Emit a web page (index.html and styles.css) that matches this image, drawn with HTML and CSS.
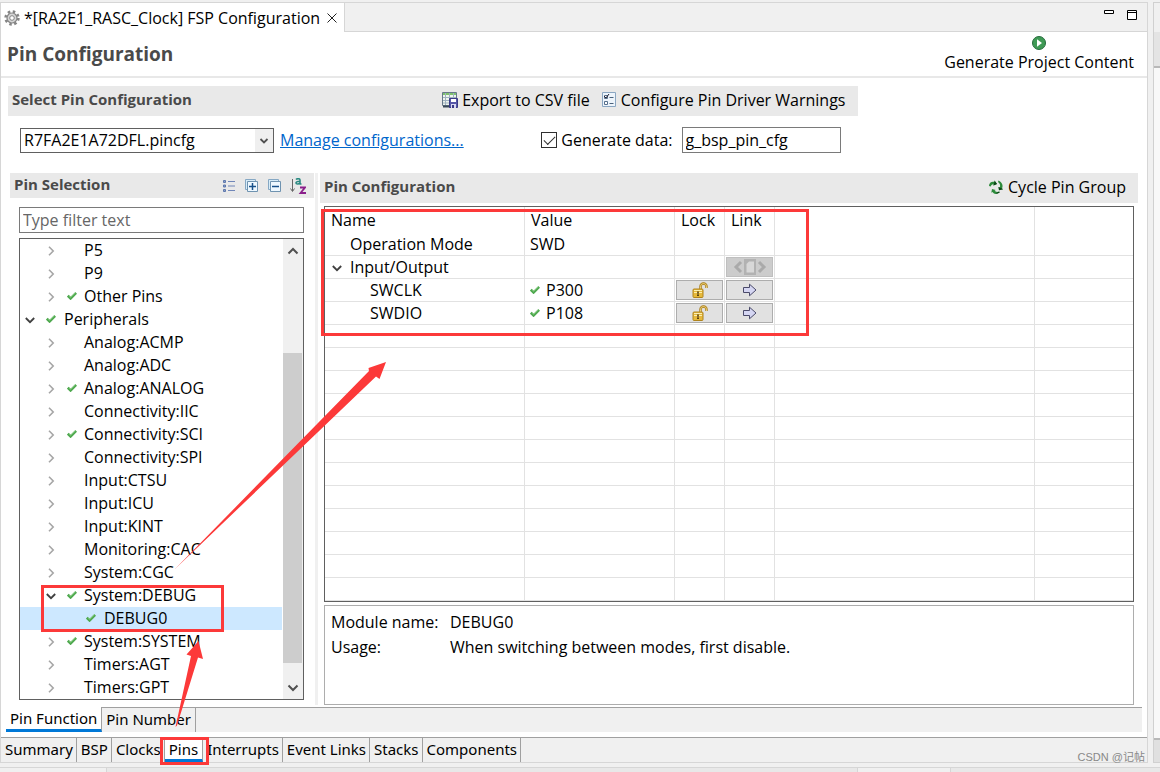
FILE: index.html
```html
<!DOCTYPE html>
<html lang="en">
<head>
<meta charset="utf-8">
<title>FSP Configuration</title>
<link rel="stylesheet" href="styles.css">
</head>
<body>
<svg class="defs" aria-hidden="true">
  <symbol id="tick" viewBox="0 0 10 8"><path d="M.8 3.700 3.600 6.500 9.200.9" fill="none" stroke="#4fa94f" stroke-width="2.500"/><path d="M2 3.700 3.700 5.300 8.600.6" fill="none" stroke="#8fd08a" stroke-width=".8"/></symbol>
  <symbol id="right" viewBox="0 0 12 12"><path d="M4 1.800 8.200 6 4 10.200" fill="none" stroke="#a6a6a6" stroke-width="1.600"/></symbol>
  <symbol id="down" viewBox="0 0 12 12"><path d="M1.800 4 6 8.200 10.200 4" fill="none" stroke="#404040" stroke-width="1.800"/></symbol>
  <symbol id="lock" viewBox="0 0 16 16"><path d="M8.500 8V4.500a3 3 0 0 1 6 0V6" fill="none" stroke="#a87a14" stroke-width="2.400"/><path d="M8.500 8V4.500a3 3 0 0 1 6 0V6" fill="none" stroke="#f4dc8a" stroke-width=".9"/><rect x="1" y="7" width="10" height="8.500" rx="1" fill="#e6b93c" stroke="#b0841c"/><path d="M2 8.500h8M2 10.500h8" stroke="#fbeeb0"/><path d="M6 10v4M5 10h2M5 13.500h2" stroke="#5a4210" stroke-width="1.200"/></symbol>
  <symbol id="arrow" viewBox="0 0 16 14"><path d="M1.500 4.500h6V1.200L14 7l-6.500 5.800V9.500h-6z" fill="#d5d6f2" stroke="#4a4a6a"/></symbol>
</svg>

<div class="workbench">
  <main class="editor">
    <header class="tabbar">
      <div class="filetab">
        <svg class="i16" viewBox="0 0 16 16"><g fill="none" stroke="#858585"><circle cx="8" cy="8" r="6.400" stroke-width="2.600" stroke-dasharray="2.500 2.526"/><circle cx="8" cy="8" r="5" fill="#d6d6d6" stroke-width="1.200"/><circle cx="8" cy="8" r="2.300" fill="#fff"/></g></svg>
        <span>*[RA2E1_RASC_Clock] FSP Configuration</span>
        <button class="plain close" aria-label="Close"><svg viewBox="0 0 10 10"><path d="M.5.5l9 9M9.500.5l-9 9" stroke="#222" fill="none"/></svg></button>
      </div>
      <div class="winbtns">
        <button class="plain" aria-label="Minimize"><svg class="i12" viewBox="0 0 12 12"><path d="M1.500 1.500h9v3h-9z" fill="#fff" stroke="#000"/></svg></button>
        <button class="plain" aria-label="Maximize"><svg class="i12" viewBox="0 0 12 12"><path d="M1.500 1.500h9v9h-9zM1.500 3.500h9" fill="#fff" stroke="#000"/></svg></button>
      </div>
    </header>

    <div class="pagehead">
      <h1>Pin Configuration</h1>
      <button class="plain generate">
        <svg class="i14" viewBox="0 0 14 14"><circle cx="7" cy="7" r="6.500" fill="#3f9a55" stroke="#256b3b"/><path d="M5 3.300 10 7l-5 3.700z" fill="#fff"/></svg>
        <span>Generate Project Content</span>
      </button>
    </div>

    <section class="select-config">
      <div class="sechead">
        <h2>Select Pin Configuration</h2>
        <button class="plain tool"><svg class="i16" viewBox="0 0 16 16"><path d="M.5.5h14v13H.5z" fill="#eef4ee" stroke="#66788a"/><path d="M1 2h13" stroke="#7ec26c" stroke-width="2"/><path d="M3.500 1v12M7.500 1v12M11.500 1v12M1 5.500h13M1 8.500h13M1 11h13" stroke="#9fb2c0"/><path d="M1 14.500h8" stroke="#3a4a5a" stroke-width="2"/><path d="M7.500 6.500h8v9h-8z" fill="#5656a8" stroke="#3a3a86"/><path d="M9 7h5v3H9z" fill="#fff"/><path d="M9 12h5v4H9z" fill="#d8d8f0"/><path d="M10 13h2v3h-2z" fill="#3a3a86"/></svg>Export to CSV file</button>
        <button class="plain tool"><svg class="i16" viewBox="0 0 16 16"><path d="M1.500.5h13v14h-13z" fill="#edf4fb" stroke="#8aa6c2"/><path d="M3.500 3.500h3v3h-3zM3.500 9.500h3v3h-3z" fill="#fff" stroke="#566f8c"/><path d="m3 4 2 2 3-4" fill="none" stroke="#223"/><path d="M8.500 5.500h4M8.500 11.500h4" stroke="#4a627c"/></svg>Configure Pin Driver Warnings</button>
      </div>
      <div class="config-row">
        <div class="combo">
          <select aria-label="Pin configuration file"><option>R7FA2E1A72DFL.pincfg</option></select>
          <svg class="i12" viewBox="0 0 12 12"><path d="M2.500 4 6 7.500 9.500 4" fill="none" stroke="#505050" stroke-width="1.800"/></svg>
        </div>
        <a href="#manage">Manage configurations...</a>
        <label class="check"><input type="checkbox" checked>Generate data:</label>
        <input class="field data-name" type="text" value="g_bsp_pin_cfg" aria-label="Generated data name">
      </div>
    </section>

    <div class="panes">
      <section class="selection">
        <div class="sechead">
          <h2>Pin Selection</h2>
          <button class="plain" aria-label="List view"><svg class="i16" viewBox="0 0 16 16"><path d="M2.500 2.500h2v2h-2zM2.500 7h2v2h-2zM2.500 11.500h2v2h-2z" fill="#8aa0cc" stroke="#5f78ac"/><path d="M7 3.500h7M7 8h7M7 12.500h7" stroke="#7086b8"/></svg></button>
          <button class="plain" aria-label="Expand all"><svg class="i16" viewBox="0 0 16 16"><path d="M1.500 1.500h10v10h-10z" fill="#d7ecf8" stroke="#86a8c4"/><path d="M3.500 3.500h10v10h-10z" fill="#eef8ff" stroke="#6f93b0"/><path d="M5 8.500h7M8.500 5v7" stroke="#17508a" stroke-width="1.500"/></svg></button>
          <button class="plain" aria-label="Collapse all"><svg class="i16" viewBox="0 0 16 16"><path d="M1.500 1.500h10v10h-10z" fill="#d7ecf8" stroke="#86a8c4"/><path d="M3.500 3.500h10v10h-10z" fill="#eef8ff" stroke="#6f93b0"/><path d="M5 8.500h7" stroke="#17508a" stroke-width="1.500"/></svg></button>
          <button class="plain" aria-label="Sort alphabetically"><svg class="i16" viewBox="0 0 16 16"><path d="M2.500 1v12M.5 10.500l2 3 2-3" fill="none" stroke="#666"/><path d="M6 1.500c1-1.200 4-1.200 4 .5v4M10 3.300C7.500 3.300 6 3.800 6 5S9 6.500 10 4.800M9.500 6H11.500" fill="none" stroke="#2b8a82" stroke-width="1.600"/><path d="M10 9.500h5L10.500 15H16" fill="none" stroke="#8b1f8b" stroke-width="1.800"/></svg></button>
        </div>
        <input class="field filter" type="text" placeholder="Type filter text" aria-label="Type filter text">
        <div class="tree">
          <ul role="tree" aria-label="Pins">
            <li class="l2" role="treeitem"><svg class="i12"><use href="#right"/></svg><i></i>P5</li>
            <li class="l2" role="treeitem"><svg class="i12"><use href="#right"/></svg><i></i>P9</li>
            <li class="l2" role="treeitem"><svg class="i12"><use href="#right"/></svg><i><svg><use href="#tick"/></svg></i>Other Pins</li>
            <li class="l1" role="treeitem"><svg class="i12"><use href="#down"/></svg><i><svg><use href="#tick"/></svg></i>Peripherals</li>
            <li class="l2" role="treeitem"><svg class="i12"><use href="#right"/></svg><i></i>Analog:ACMP</li>
            <li class="l2" role="treeitem"><svg class="i12"><use href="#right"/></svg><i></i>Analog:ADC</li>
            <li class="l2" role="treeitem"><svg class="i12"><use href="#right"/></svg><i><svg><use href="#tick"/></svg></i>Analog:ANALOG</li>
            <li class="l2" role="treeitem"><svg class="i12"><use href="#right"/></svg><i></i>Connectivity:IIC</li>
            <li class="l2" role="treeitem"><svg class="i12"><use href="#right"/></svg><i><svg><use href="#tick"/></svg></i>Connectivity:SCI</li>
            <li class="l2" role="treeitem"><svg class="i12"><use href="#right"/></svg><i></i>Connectivity:SPI</li>
            <li class="l2" role="treeitem"><svg class="i12"><use href="#right"/></svg><i></i>Input:CTSU</li>
            <li class="l2" role="treeitem"><svg class="i12"><use href="#right"/></svg><i></i>Input:ICU</li>
            <li class="l2" role="treeitem"><svg class="i12"><use href="#right"/></svg><i></i>Input:KINT</li>
            <li class="l2" role="treeitem"><svg class="i12"><use href="#right"/></svg><i></i>Monitoring:CAC</li>
            <li class="l2" role="treeitem"><svg class="i12"><use href="#right"/></svg><i></i>System:CGC</li>
            <li class="l2" role="treeitem"><svg class="i12"><use href="#down"/></svg><i><svg><use href="#tick"/></svg></i>System:DEBUG</li>
            <li class="l3 selected" role="treeitem" aria-selected="true"><svg class="i12"></svg><i><svg><use href="#tick"/></svg></i>DEBUG0</li>
            <li class="l2" role="treeitem"><svg class="i12"><use href="#right"/></svg><i><svg><use href="#tick"/></svg></i>System:SYSTEM</li>
            <li class="l2" role="treeitem"><svg class="i12"><use href="#right"/></svg><i></i>Timers:AGT</li>
            <li class="l2" role="treeitem"><svg class="i12"><use href="#right"/></svg><i></i>Timers:GPT</li>
          </ul>
          <div class="scroll">
            <button class="plain" aria-label="Scroll up"><svg class="i12" viewBox="0 0 12 12"><path d="M1.500 8.500 6 4l4.500 4.500" fill="none" stroke="#505050" stroke-width="2"/></svg></button>
            <div class="track"><div class="thumb"></div></div>
            <button class="plain" aria-label="Scroll down"><svg class="i12" viewBox="0 0 12 12"><path d="M1.500 3.500 6 8l4.500-4.500" fill="none" stroke="#505050" stroke-width="2"/></svg></button>
          </div>
        </div>
      </section>
      <div class="sash"></div>
      <section class="details">
        <div class="sechead">
          <h2>Pin Configuration</h2>
          <button class="plain tool"><svg class="i16" viewBox="0 0 16 16"><g fill="#2c8a3a"><path d="M1 7C1 3.500 4 2 6.500 3V1.500L9 5 5.500 6.500V5.200C4 5 3 6 2.800 7.500z"/><path d="M10.500 1.500C14 3 15.500 6.500 14 9.500l1 .7-4 1L10.500 8l1.300.6C12.600 6.500 12 4.500 10 3z"/><path d="M11.500 13.500C9 15.500 6 15.500 4.500 13L3.300 13.800 4 10l3.800 1-1.200.8c1 1.200 2.600 1.500 4.400.7z"/></g><g fill="#0c4416"><path d="M6.500 3V1.500L9 5 5.500 6.500zM14 9.500l1 .7-4 1L10.500 8zM9 13.500l2.500-1v1.200L8 15z"/></g></svg>Cycle Pin Group</button>
        </div>
        <div class="tablebox">
          <table>
            <colgroup><col class="c-name"><col class="c-value"><col class="c-btn"><col class="c-btn"><col class="c-extra"><col></colgroup>
            <thead><tr><th>Name</th><th>Value</th><th>Lock</th><th>Link</th><th></th><th></th></tr></thead>
            <tbody>
              <tr><td class="d1">Operation Mode</td><td>SWD</td><td></td><td></td><td></td><td></td></tr>
              <tr><td class="d0"><svg class="i12"><use href="#down"/></svg>Input/Output</td><td></td><td></td><td class="cell"><button class="cellbtn off" disabled aria-label="Link unavailable"><svg class="wide" viewBox="0 0 34 16"><path d="M8 3 3 8l5 5M26 3l5 5-5 5" fill="none" stroke="#aaa" stroke-width="3"/><path d="M11 0h12v16H11z" fill="#b2b2b2"/><path d="M13.500 5 16 2.500h5v11h-7.500z" fill="#d8d8d8"/></svg></button></td><td></td><td></td></tr>
              <tr><td class="d2">SWCLK</td><td><svg class="tick"><use href="#tick"/></svg>P300</td><td class="cell"><button class="cellbtn" aria-label="Lock SWCLK"><svg class="i16"><use href="#lock"/></svg></button></td><td class="cell"><button class="cellbtn" aria-label="Go to P300"><svg class="i16"><use href="#arrow"/></svg></button></td><td></td><td></td></tr>
              <tr><td class="d2">SWDIO</td><td><svg class="tick"><use href="#tick"/></svg>P108</td><td class="cell"><button class="cellbtn" aria-label="Lock SWDIO"><svg class="i16"><use href="#lock"/></svg></button></td><td class="cell"><button class="cellbtn" aria-label="Go to P108"><svg class="i16"><use href="#arrow"/></svg></button></td><td></td><td></td></tr>
              <tr><td></td><td></td><td></td><td></td><td></td><td></td></tr>
              <tr><td></td><td></td><td></td><td></td><td></td><td></td></tr>
              <tr><td></td><td></td><td></td><td></td><td></td><td></td></tr>
              <tr><td></td><td></td><td></td><td></td><td></td><td></td></tr>
              <tr><td></td><td></td><td></td><td></td><td></td><td></td></tr>
              <tr><td></td><td></td><td></td><td></td><td></td><td></td></tr>
              <tr><td></td><td></td><td></td><td></td><td></td><td></td></tr>
              <tr><td></td><td></td><td></td><td></td><td></td><td></td></tr>
              <tr><td></td><td></td><td></td><td></td><td></td><td></td></tr>
              <tr><td></td><td></td><td></td><td></td><td></td><td></td></tr>
              <tr><td></td><td></td><td></td><td></td><td></td><td></td></tr>
              <tr><td></td><td></td><td></td><td></td><td></td><td></td></tr>
            </tbody>
          </table>
        </div>
        <dl class="module">
          <dt>Module name:</dt><dd>DEBUG0</dd>
          <dt>Usage:</dt><dd>When switching between modes, first disable.</dd>
        </dl>
      </section>
    </div>

    <nav class="tabs inner">
      <button class="active">Pin Function</button><button>Pin Number</button><span class="rest"></span>
    </nav>
    <nav class="tabs outer">
      <button>Summary</button><button>BSP</button><button>Clocks</button><button class="active">Pins</button><button>Interrupts</button><button>Event Links</button><button>Stacks</button><button>Components</button><span class="rest"></span>
    </nav>
  </main>
  <aside class="neighbor"><div class="ntab"></div><div class="ntool"></div><div class="nbody"></div><div class="nfoot"></div></aside>
</div>
<footer class="below"><div class="b1"></div><div class="b2"></div><div class="b3"></div></footer>

<svg class="marks" viewBox="0 0 1160 772" aria-hidden="true">
  <g fill="none" stroke="#fc3939" stroke-width="3">
    <rect x="322.500" y="210.500" width="485" height="124"/>
    <rect x="42.500" y="586.500" width="180" height="44"/>
    <rect x="161.500" y="738.500" width="46" height="25"/>
  </g>
  <g fill="#fc3939">
    <path d="M174.500 569.500 369 371l-.500-3L386 362l-6.500 17-3.500-2.500z"/>
    <path d="M175.500 727 191 656l-4.500-1.500L198.500 641l4.500 18-5-1.500L177 725.500z"/>
  </g>
</svg>
<div class="watermark">CSDN @记帖</div>
</body>
</html>
```
FILE: styles.css
```css
* { box-sizing: border-box; }
html, body { margin: 0; }
body {
  position: relative;
  min-height: 100vh;
  display: flex;
  flex-direction: column;
  overflow: hidden;
  background: #f0f0f0;
  color: #000;
  font: 16px/22px "Open Sans", "Noto Sans", "Noto Sans CJK SC", sans-serif;
  white-space: nowrap;
}
button, input, select { font: inherit; color: inherit; }
h1, h2 { margin: 0; color: #4a4a4a; font-weight: 700; }
h1 { font-size: 19px; }
h2 { flex: 1; font-size: 15px; padding-bottom: 4px; }
svg { display: block; flex: none; }
.defs { position: absolute; width: 0; height: 0; }
.i16 { width: 16px; height: 16px; }
.i14 { width: 14px; height: 14px; }
.i12 { width: 12px; height: 12px; }
.plain { display: flex; align-items: center; border: 0; padding: 0; background: none; }

.workbench { flex: 1; display: flex; gap: 5px; padding-top: 2px; }
.editor {
  flex: 1;
  min-width: 0;
  display: flex;
  flex-direction: column;
  background: #fff;
  border: 1px solid #d6d6d6;
}

.tabbar { display: flex; justify-content: space-between; height: 29px; background: #f0f0f0; }
.filetab { display: flex; align-items: center; gap: 4px; padding: 0 7px 0 3px; background: #fff; border-right: 1px solid #d6d6d6; }
.close { margin-left: 3px; }
.close svg { width: 10px; height: 10px; }
.winbtns { flex: 1; display: flex; justify-content: flex-end; align-items: flex-start; gap: 11px; padding: 6px 9px 0 0; border-bottom: 1px solid #d6d6d6; }

.pagehead { display: flex; justify-content: space-between; align-items: center; height: 46px; padding: 0 13px 0 6px; border-bottom: 2px solid #e8e8e8; }
.generate { flex-direction: column; gap: 1px; }

.select-config { width: 75%; padding: 8px 3px 0 7px; }
.sechead { display: flex; align-items: center; background: #e9e9e9; }
.select-config .sechead { height: 30px; gap: 11px; padding: 0 12px 0 4px; }
.tool { gap: 4px; padding-bottom: 2px; }
.config-row { display: flex; align-items: center; height: 48px; padding: 0 17px 0 12px; }
.combo { position: relative; width: 254px; margin-right: 6px; }
.combo select { appearance: none; display: block; width: 100%; height: 25px; padding: 0 20px 0 3px; border: 1px solid #606060; border-radius: 0; background: linear-gradient(to left, #efefef 18px, #fff 18px); }
.combo svg { position: absolute; right: 4px; top: 7px; pointer-events: none; }
a { color: #0066cc; }
.check { display: flex; align-items: center; gap: 4px; margin-left: auto; }
.check input { appearance: none; display: grid; place-items: center; width: 16px; height: 16px; margin: 0; border: 1px solid #303030; background: #fff; }
.check input:checked::after { content: ""; width: 10px; height: 5px; border: solid #303030; border-width: 0 0 1px 1px; transform: rotate(-45deg); margin-bottom: 3px; }
.field { height: 26px; padding: 0 3px; border: 1px solid #7a7a7a; border-radius: 0; background: #fff; }
.data-name { width: 159px; margin-left: 9px; }
.field::placeholder { color: #666; opacity: 1; }

.panes { flex: 1; display: flex; padding: 9px 9px 2px; }
.selection { width: 304px; display: flex; flex-direction: column; }
.selection .sechead { height: 25px; gap: 7px; padding: 0 8px 0 4px; }
.filter { margin: 9px 10px 5px 9px; }
.tree { display: flex; height: 462px; margin: 0 10px 0 9px; border: 1px solid #606060; }
.tree ul { flex: 1; margin: 0; padding: 0; list-style: none; }
.tree li { display: flex; align-items: center; height: 23px; line-height: 23px; }
.tree .selected { background: #cde8ff; }
.l1 { padding-left: 4px; }
.l2 { padding-left: 25px; }
.l3 { padding-left: 44px; }
.tree i { width: 28px; padding-left: 10px; flex: none; }
.tree .l2 i { width: 27px; }
.tree i svg, .tick { width: 10px; height: 8px; }
.tree i svg { margin-bottom: 2px; }
.scroll { display: flex; flex-direction: column; width: 20px; margin-left: 1px; background: #f0f0f0; }
.scroll button { height: 23px; justify-content: center; }
.track { flex: 1; padding: 91px 1px 0 0; }
.thumb { height: 310px; background: #cdcdcd; }
.sash { width: 3px; margin: 0 2px 0 1px; background: #f0f0f0; }

.details { flex: 1; min-width: 0; display: flex; flex-direction: column; }
.details .sechead { height: 30px; padding: 0 12px 0 4px; }
.tablebox { margin: 3px 4px; border: 1px solid #606060; }
table { width: 100%; table-layout: fixed; border-collapse: separate; border-spacing: 0; }
.c-name { width: 200px; }
.c-value { width: 150px; }
.c-btn { width: 50px; }
.c-extra { width: 260px; }
th, td { height: 23px; padding: 0 0 0 6px; border-right: 1px solid #e2e2e2; text-align: left; font-weight: 400; line-height: 22px; }
td { border-bottom: 1px solid #e2e2e2; padding-left: 5px; }
th { height: 26px; }
th:last-child, td:last-child { border-right: 0; }
td svg { display: inline-block; }
.d0 { padding-left: 6px; }
.d0 svg { margin-right: 7px; vertical-align: -1px; }
.d1 { padding-left: 25px; }
.d2 { padding-left: 45px; }
.tick { margin-right: 6px; vertical-align: 2px; }
.cell { padding: 1px; }
.cellbtn { display: flex; align-items: center; justify-content: center; width: 100%; height: 20px; padding: 0; border: 1px solid #adadad; background: #e1e1e1; }
.off { background: #ccc; border-color: #bfbfbf; }
.wide { width: 34px; height: 16px; }
.module { flex: 1; display: grid; grid-template-columns: 119px 1fr; grid-auto-rows: 25px; align-content: start; margin: 0 4px; padding: 4px 6px 0; border: 1px solid #adadad; line-height: 25px; }
.module dd { margin: 0; }

.tabs { display: flex; height: 25px; font: 15px/22px "Noto Sans", "Open Sans", sans-serif; }
.tabs button { border: solid #a0a0a0; border-width: 1px 1px 0 0; padding: 0 4px 2px; background: #f0f0f0; }
.tabs .rest { flex: 1; border-top: 1px solid #a0a0a0; background: #f0f0f0; }
.tabs .active { padding: 0 4px; background: #fff; border-bottom: 3px solid #0078d7; }
.outer button { padding: 0 3px 2px 4px; }
.outer .active { padding: 0 4px; }
.inner { margin: 0 5px 5px; }
.inner .active { border-top: 0; }

.neighbor { display: flex; flex-direction: column; width: 7px; border: solid #d0d0d0; border-width: 1px 0 1px 1px; background: #f0f0f0; }
.ntab { height: 29px; }
.ntool { height: 36px; background: #e4e4e4; border-bottom: 2px solid #b8b8b8; }
.nbody { flex: 1; background: #f8f8f8; border-bottom: 2px solid #b8b8b8; }
.nfoot { height: 22px; background: #e0e0e0; }
.below { display: flex; height: 5px; margin-top: 4px; border-top: 1px solid #d6d6d6; background: #e8e8e8; }
.b1 { width: 107px; background: #f0f0f0; border-right: 1px solid #d6d6d6; }
.b2 { flex: 1; }
.b3 { width: 94px; margin-right: 209px; background: #f0f0f0; border: solid #d6d6d6; border-width: 0 1px; }

.marks { position: absolute; left: 0; top: 0; width: 1160px; height: 772px; pointer-events: none; }
.watermark { position: absolute; right: 15px; bottom: 4px; color: #888; font: 11px/22px "Liberation Sans", "Noto Sans CJK SC", sans-serif; }
```
